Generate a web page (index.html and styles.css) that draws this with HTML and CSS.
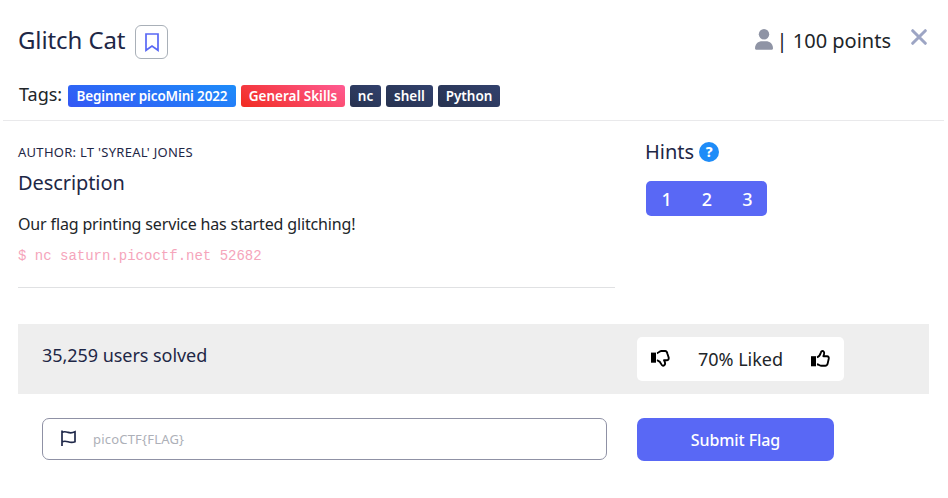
FILE: index.html
```html
<!DOCTYPE html>
<html lang="en">
<head>
<meta charset="utf-8">
<title>Glitch Cat</title>
<link rel="stylesheet" href="styles.css">
</head>
<body>
<header class="header">
  <div class="title-row">
    <h1 class="title">Glitch Cat</h1>
    <button class="bookmark" aria-label="Bookmark"><svg width="14" height="19" viewBox="0 0 14 19"><path d="M1 1H13V17.300L7 13.100L1 17.300Z" fill="none" stroke="#5968f5" stroke-width="1.700"/></svg></button>
    <div class="points">
      <svg class="user" width="18" height="21" viewBox="0 0 18 21"><circle cx="9" cy="5.300" r="5.200" fill="#8f94a5"/><path d="M0 19.600C0 14.800 3.200 12.300 7.200 12.300H10.800C14.800 12.300 18 14.800 18 19.600Q18 20.700 16.900 20.700H1.100Q0 20.700 0 19.600Z" fill="#8f94a5"/></svg>
      <span>| 100 points</span>
    </div>
    <button class="close" aria-label="Close"><svg width="16" height="16" viewBox="0 0 16 16"><path d="M1.700 1.700L14.300 14.300M14.300 1.700L1.700 14.300" stroke="#9da5c4" stroke-width="3" stroke-linecap="round"/></svg></button>
  </div>
  <div class="tags">
    <span class="tags-label">Tags:</span>
    <span class="tag tag-blue">Beginner picoMini 2022</span>
    <span class="tag tag-red">General Skills</span>
    <span class="tag nc">nc</span>
    <span class="tag shell">shell</span>
    <span class="tag python">Python</span>
  </div>
</header>
<main class="content">
  <section class="details">
    <div class="author">AUTHOR: LT 'SYREAL' JONES</div>
    <h2 class="subtitle">Description</h2>
    <p class="text">Our flag printing service has started glitching!</p>
    <code class="code">$ nc saturn.picoctf.net 52682</code>
  </section>
  <aside class="hints">
    <div class="hints-head"><h2 class="hints-title">Hints</h2><span class="help">?</span></div>
    <div class="hint-group"><button>1</button><button>2</button><button>3</button></div>
  </aside>
</main>
<div class="stats">
  <div class="solved">35,259 users solved</div>
  <div class="rating">
    <svg class="down" width="19" height="17" viewBox="0 0 19 17"><path d="M0 2.600H5V12.700H0Z"/><path d="M6 3.200C7.800 2.900 8.200 1.200 10.200 1H14.200C15.900 1 16.200 2.500 16.500 4L17.600 7.300C18 9 17.200 10.200 15.800 10.200H13C14.200 12.200 14.300 14.400 13.200 15.300C12.200 16.200 11 15.700 10.500 14.500C9.700 12.500 8.800 11.200 6 10.200" fill="none" stroke="#000" stroke-width="1.900" stroke-linejoin="round"/></svg>
    <span class="liked">70% Liked</span>
    <svg class="up" width="19" height="17" viewBox="0 0 19 17"><path d="M0 6.200H5V16.300H0Z"/><path d="M6 7.400C8 6.800 9.200 4.800 9.900 2.500C10.200 1.200 11.500 .7 12.500 1.400C13.700 2.300 13.200 4.200 12.400 6.200H16C17.500 6.200 18 7.300 17.700 8.900L16.700 13.400C16.300 15.300 15.700 15.800 14.200 15.800H10.500C8.500 15.800 7.900 14.500 6 14.200" fill="none" stroke="#000" stroke-width="1.900" stroke-linejoin="round"/></svg>
  </div>
</div>
<form class="submit">
  <label class="field">
    <svg width="16" height="17" viewBox="0 0 16 17"><path d="M1 .5V16M1 2.600C3 1 4.500 1.600 7 2.400C9.500 3.200 11.500 3 14 1.800V11.700C11.500 12.900 9.500 12.600 7 11.800C4.500 11 3 10.800 1 12" fill="none" stroke="#20294a" stroke-width="1.700"/></svg>
    <input type="text" placeholder="picoCTF{FLAG}">
  </label>
  <button class="submit-btn" type="button">Submit Flag</button>
</form>
</body>
</html>
```

FILE: styles.css
```css
* { box-sizing: border-box; }
body { margin: 0; background: #fff; color: #212529; font-family: "Noto Sans", sans-serif; }
h1, h2, p { margin: 0; font-weight: 400; }
button { font-family: inherit; border: 0; padding: 0; background: none; }
svg { display: block; flex: none; }
.header { margin: 0 4px 0 3px; height: 121px; padding: 25px 14px 0 15px; border-bottom: 1px solid #e9e9eb; }
.title-row { display: flex; height: 34px; }
.title { width: 117px; font-size: 24px; line-height: 29px; letter-spacing: -0.1px; color: #1e2746; white-space: nowrap; }
.bookmark { width: 33px; height: 34px; border: 1px solid #a9b0b8; border-radius: 6px; display: grid; place-items: center; }
.points { display: flex; margin-left: auto; font-size: 20px; line-height: 32px; gap: 4px; white-space: nowrap; }
.user { margin-top: 4px; }
.close { width: 16px; height: 16px; margin: 4px 3px 0 20px; }
.tags { display: flex; align-items: flex-start; gap: 5px; margin-top: 26px; }
.tags-label { width: 45px; padding-left: 1px; font-size: 18px; line-height: 19px; }
.tag { width: 168px; height: 22px; border-radius: 3px; color: #fff; font-size: 13.5px; font-weight: 600; line-height: 22px; text-align: center; white-space: nowrap; background: linear-gradient(30deg, #27324f, #32416d); }
.tag-blue { background: linear-gradient(20deg, #3457f4, #1d8cfa); letter-spacing: -0.15px; }
.tag-red { width: 104px; background: linear-gradient(30deg, #f12b20, #ff5b93); }
.nc { width: 31px; }
.shell { width: 47px; }
.python { width: 62px; }
.content { display: grid; grid-template-columns: 597px 1fr; column-gap: 30px; margin: 0 18px; height: 203px; }
.details { height: 167px; padding-top: 21px; border-bottom: 1px solid #e0e1e3; }
.author { font-size: 13px; line-height: 20px; letter-spacing: 0.28px; color: #1e2746; }
.subtitle { margin-top: 6px; font-size: 20px; line-height: 30px; letter-spacing: -0.08px; color: #1e2746; }
.text { margin-top: 14px; font-size: 16px; line-height: 24px; letter-spacing: -0.15px; }
.code { display: block; margin-top: 10px; font: 14px/20px "Liberation Mono", monospace; color: #f5a5bb; }
.hints { padding-top: 16px; }
.hints-head { display: flex; align-items: center; gap: 5px; height: 30px; }
.hints-title { font-size: 20px; line-height: 30px; color: #1e2746; }
.help { width: 20px; height: 20px; border-radius: 50%; background: #1e8cf8; color: #fff; font-size: 14px; font-weight: 800; line-height: 20px; text-align: center; }
.hint-group { display: flex; width: 121px; height: 35px; margin: 14px 0 0 1px; border-radius: 5px; background: #5968f5; }
.hint-group button { flex: 1; padding: 1px 0 0 1px; color: #fff; font-size: 18px; font-weight: 500; line-height: 34px; }
.stats { display: flex; align-items: flex-start; height: 70px; margin: 0 19px 0 18px; padding: 13px 0 0 24px; background: #eee; }
.solved { width: 595px; padding-top: 5px; font-size: 18px; line-height: 27px; letter-spacing: -0.05px; color: #1e2746; }
.rating { display: flex; align-items: center; justify-content: space-between; width: 207px; height: 44px; padding: 0 14px; border-radius: 5px; background: #fff; }
.rating svg { margin-bottom: 1px; }
.liked { font-size: 18px; }
.submit { display: flex; gap: 30px; margin: 24px 0 0 42px; }
.field { display: flex; align-items: center; gap: 16px; width: 565px; height: 42px; padding-left: 18px; border: 1px solid #8f91a5; border-radius: 7px; }
.field svg { margin-bottom: 1px; }
.field input { width: 400px; padding: 0; border: 0; outline: 0; background: none; font: 13px/20px "Noto Sans", sans-serif; letter-spacing: 0.2px; }
.field input::placeholder { color: #adb0b8; }
.submit-btn { width: 197px; height: 43px; border-radius: 7px; background: #5968f5; color: #fff; font-size: 16px; font-weight: 500; letter-spacing: -0.1px; }
```
